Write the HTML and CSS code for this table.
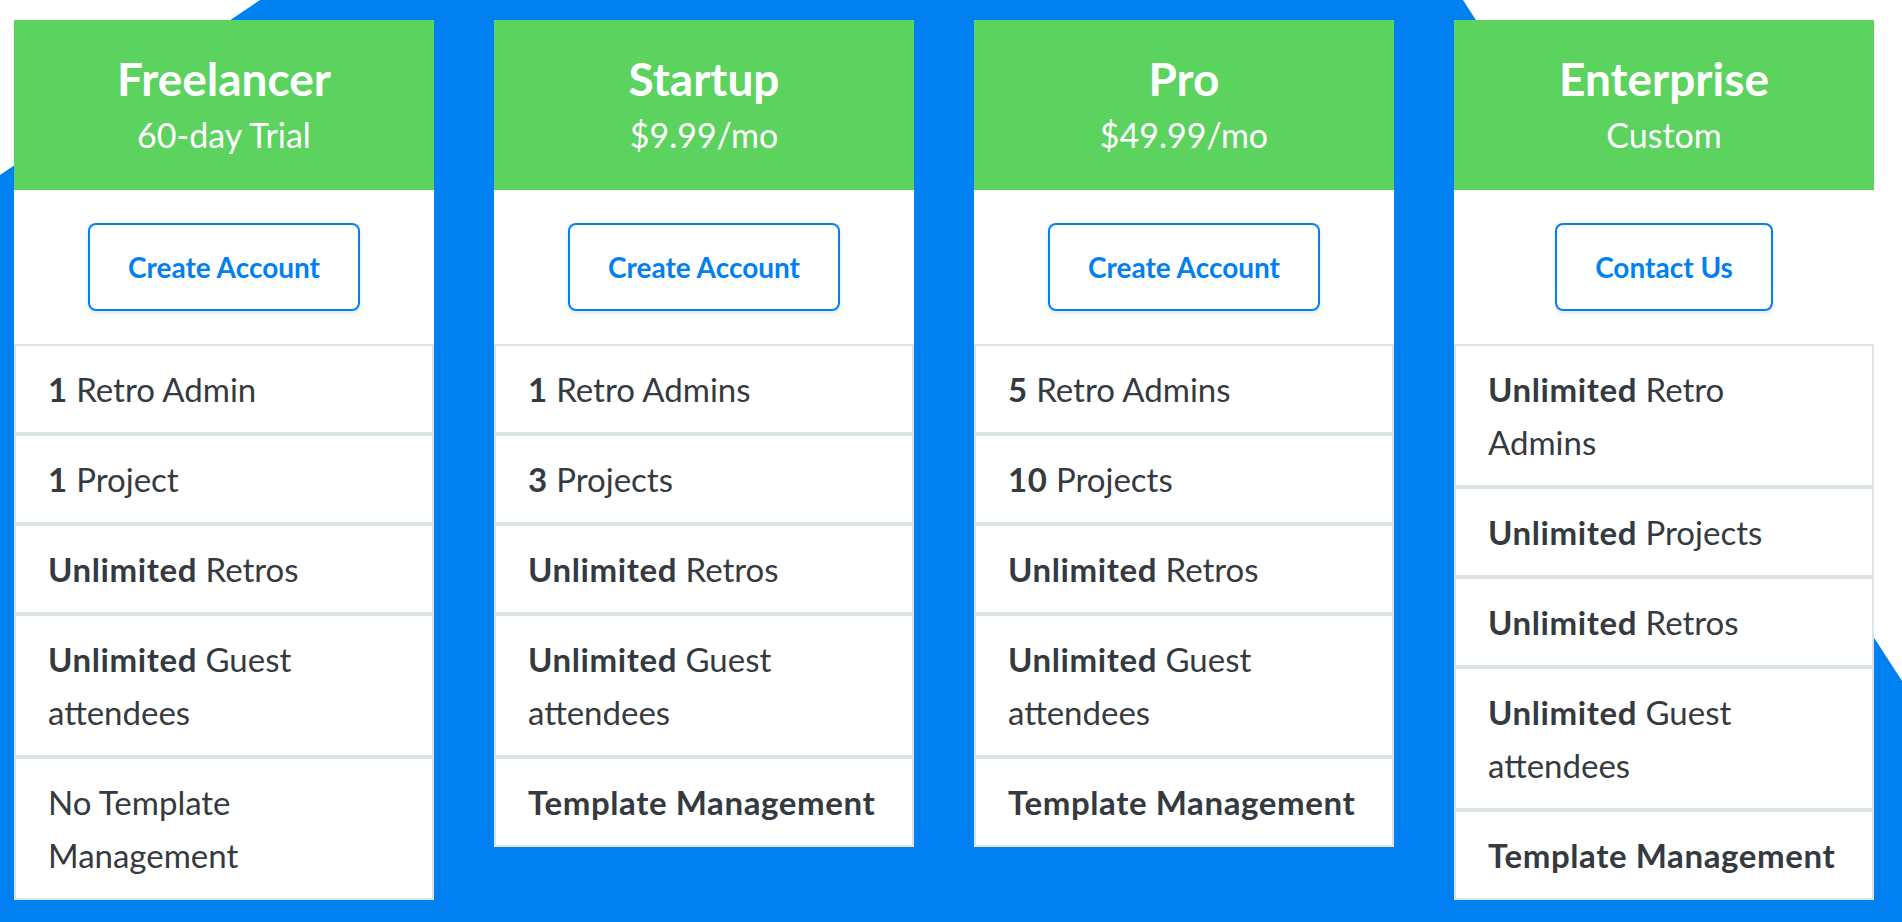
FILE: index.html
```html
<!DOCTYPE html>
<html lang="en">

<head>
    <meta charset="UTF-8">
    <meta name="viewport" content="width=device-width, initial-scale=1.0">
    <title>Pricing</title>
    <link rel="stylesheet" href="styles.css">
</head>

<body>
    <div class="backdrop"></div>
    <div class="pricing">
        <div class="plan">
            <div class="plan-head">
                <h2>Freelancer</h2>
                <p>60-day Trial</p>
            </div>
            <div class="plan-action">
                <a class="btn" href="#">Create Account</a>
            </div>
            <ul class="features">
                <li><b>1</b> Retro Admin</li>
                <li><b>1</b> Project</li>
                <li><b>Unlimited</b> Retros</li>
                <li><b>Unlimited</b> Guest attendees</li>
                <li>No Template Management</li>
            </ul>
        </div>
        <div class="plan">
            <div class="plan-head">
                <h2>Startup</h2>
                <p>$9.99/mo</p>
            </div>
            <div class="plan-action">
                <a class="btn" href="#">Create Account</a>
            </div>
            <ul class="features">
                <li><b>1</b> Retro Admins</li>
                <li><b>3</b> Projects</li>
                <li><b>Unlimited</b> Retros</li>
                <li><b>Unlimited</b> Guest attendees</li>
                <li><b>Template Management</b></li>
            </ul>
        </div>
        <div class="plan">
            <div class="plan-head">
                <h2>Pro</h2>
                <p>$49.99/mo</p>
            </div>
            <div class="plan-action">
                <a class="btn" href="#">Create Account</a>
            </div>
            <ul class="features">
                <li><b>5</b> Retro Admins</li>
                <li><b>10</b> Projects</li>
                <li><b>Unlimited</b> Retros</li>
                <li><b>Unlimited</b> Guest attendees</li>
                <li><b>Template Management</b></li>
            </ul>
        </div>
        <div class="plan">
            <div class="plan-head">
                <h2>Enterprise</h2>
                <p>Custom</p>
            </div>
            <div class="plan-action">
                <a class="btn" href="#">Contact Us</a>
            </div>
            <ul class="features">
                <li><b>Unlimited</b> Retro Admins</li>
                <li><b>Unlimited</b> Projects</li>
                <li><b>Unlimited</b> Retros</li>
                <li><b>Unlimited</b> Guest attendees</li>
                <li><b>Template Management</b></li>
            </ul>
        </div>
    </div>
</body>

</html>
```

FILE: styles.css
```css
body {
    margin: 0;
    background-color: #ffffff;
    font-family: Lato, "Open Sans", sans-serif;
    color: #343a40;
    min-height: 922px;
    position: relative;
    overflow: hidden;
}

/* blue slanted band behind the cards */
.backdrop {
    position: absolute;
    top: 0;
    left: 0;
    right: 0;
    bottom: 0;
    background-color: #0180f1;
    clip-path: polygon(0 175px, 260px 0, 1463px 0, 100% 681px, 100% 100%, 0 100%);
}

.pricing {
    position: relative;
    display: flex;
    align-items: flex-start;
    gap: 60px;
    padding: 20px 28px 0 14px;
}

.plan {
    width: 420px;
    background-color: #ffffff;
}

.plan-head {
    background-color: #5cd25f;
    color: #ffffff;
    text-align: center;
    height: 170px;
    box-sizing: border-box;
    padding-top: 31px;
}

.plan-head h2 {
    margin: 0;
    font-size: 46px;
    font-weight: 700;
    line-height: 56px;
}

.plan-head p {
    margin: 0;
    font-size: 34px;
    font-weight: 400;
    line-height: 56px;
}

.plan-action {
    padding: 33px 0;
    text-align: center;
}

.btn {
    display: inline-block;
    height: 88px;
    box-sizing: border-box;
    padding: 0 38px;
    border: 2px solid #0180f1;
    border-radius: 8px;
    color: #0180f1;
    font-size: 28px;
    font-weight: 700;
    line-height: 84px;
    text-decoration: none;
    box-shadow: 0 2px 4px rgba(0, 0, 0, 0.12);
}

.features {
    list-style: none;
    margin: 0;
    padding: 0;
}

.features li {
    border: 2px solid #dde4e7;
    padding: 16.5px 33px 16.5px 32px;
    font-size: 33px;
    line-height: 53px;
    background-color: #ffffff;
}

.features b {
    font-weight: 700;
    letter-spacing: 0.6px;
}
```
